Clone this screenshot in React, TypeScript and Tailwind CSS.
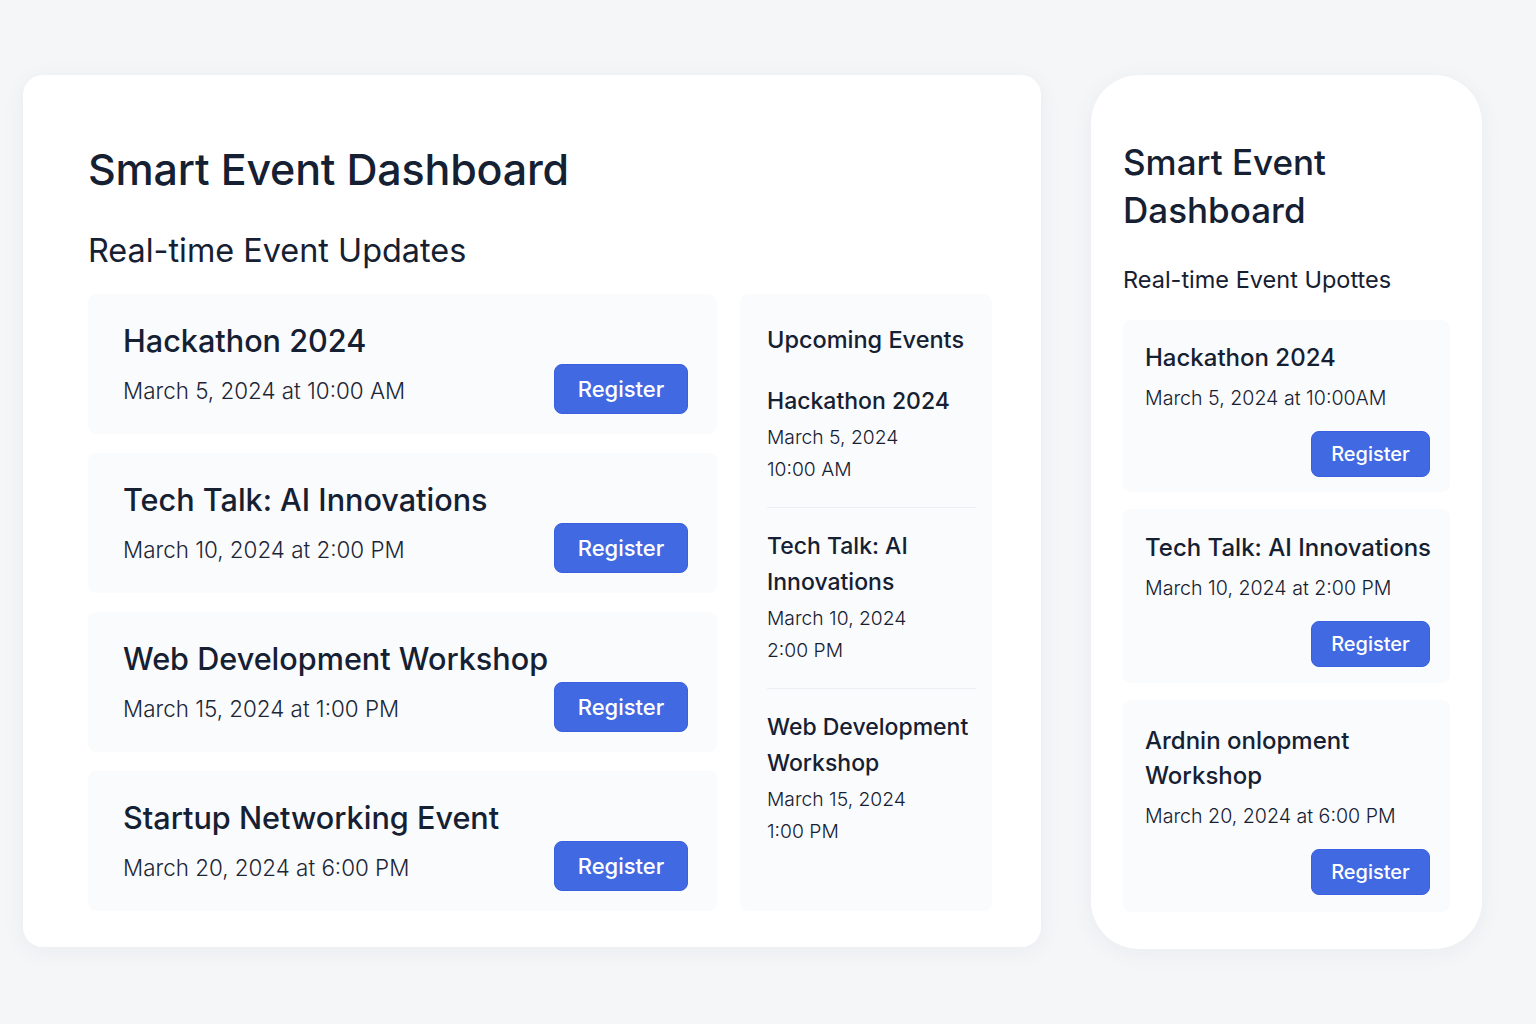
import React from "react";

interface EventItem {
  title: string;
  date: string;
  day: string;
  time: string;
}

const events: EventItem[] = [
  { title: "Hackathon 2024", date: "March 5, 2024 at 10:00 AM", day: "March 5, 2024", time: "10:00 AM" },
  { title: "Tech Talk: AI Innovations", date: "March 10, 2024 at 2:00 PM", day: "March 10, 2024", time: "2:00 PM" },
  { title: "Web Development Workshop", date: "March 15, 2024 at 1:00 PM", day: "March 15, 2024", time: "1:00 PM" },
  { title: "Startup Networking Event", date: "March 20, 2024 at 6:00 PM", day: "March 20, 2024", time: "6:00 PM" },
];

const compactEvents = [
  { title: "Hackathon 2024", date: "March 5, 2024 at 10:00AM", h: "h-[172px]", pt: "pt-[20px]" },
  { title: "Tech Talk: AI Innovations", date: "March 10, 2024 at 2:00 PM", h: "h-[174px]", pt: "pt-[21px]" },
  { title: "Ardnin onlopment Workshop", date: "March 20, 2024 at 6:00 PM", h: "h-[212px]", pt: "pt-[23px]" },
];

const RegisterButton: React.FC<{ small?: boolean }> = ({ small }) => (
  <button
    className={
      small
        ? "w-[119px] h-[46px] rounded-lg bg-[#4169e1] border border-[#3a5fe0] text-white text-[20px] font-medium"
        : "w-[134px] h-[50px] rounded-lg bg-[#4169e1] border border-[#3a5fe0] text-white text-[22px] font-medium"
    }
  >
    Register
  </button>
);

const EventCard: React.FC<{ item: EventItem }> = ({ item }) => (
  <div className="h-[140px] rounded-lg bg-[#fafbfc] pl-[35px] pr-[29px] pb-[20px] flex items-end justify-between">
    <div className="pb-[8px]">
      <div className="text-[30.6px] leading-[40px] font-medium text-[#152032]">{item.title}</div>
      <div className="text-[22.4px] leading-[30px] font-light text-[#1d2636] mt-[15px]">{item.date}</div>
    </div>
    <RegisterButton />
  </div>
);

export default function App() {
  return (
    <div className="min-h-screen bg-[#f5f6f8] font-['Inter',sans-serif] text-[#152032]">
      <div className="flex items-start pt-[75px] pl-[23px] gap-[50px]">
        {/* main dashboard */}
        <div className="w-[1018px] bg-white rounded-[20px] shadow-[0_4px_24px_rgba(20,30,50,0.05)] pl-[65px] pr-[49px] pt-[66px] pb-[36px]">
          <h1 className="text-[43px] leading-[56px] font-medium tracking-[-0.2px] text-[#152032]">Smart Event Dashboard</h1>
          <h2 className="text-[32.4px] leading-[40px] font-normal text-[#152032] mt-[34px]">Real-time Event Updates</h2>

          <div className="flex gap-[23px] mt-[23px]">
            <div className="w-[629px] flex flex-col gap-[19px]">
              {events.map((e) => (
                <EventCard key={e.title} item={e} />
              ))}
            </div>

            <div className="w-[252px] rounded-lg bg-[#fafbfc] pl-[27px] pr-[16px] pt-[30px]">
              <div className="text-[23.5px] leading-[32px] font-medium">Upcoming Events</div>
              <div className="mt-[27px]">
                {events.slice(0, 3).map((e, i) => (
                  <div key={e.title} className={i > 0 ? "border-t border-[#eceef2] pt-[20px] pb-[22px]" : "pb-[22px]"}>
                    <div className="text-[23px] leading-[36px] font-medium">{e.title}</div>
                    <div className="text-[19.3px] leading-[32px] font-light mt-[2px]">{e.day}</div>
                    <div className="text-[19.3px] leading-[32px] font-light">{e.time}</div>
                  </div>
                ))}
              </div>
            </div>
          </div>
        </div>

        {/* compact dashboard */}
        <div className="w-[391px] bg-white rounded-[48px] shadow-[0_4px_24px_rgba(20,30,50,0.05)] px-[32px] pt-[63px] pb-[37px]">
          <h1 className="text-[35px] leading-[48px] font-medium text-[#152032]">Smart Event Dashboard</h1>
          <div className="text-[23.5px] leading-[32px] font-normal mt-[30px]">Real-time Event Upottes</div>
          <div className="flex flex-col gap-[17px] mt-[24px]">
            {compactEvents.map((e) => (
              <div key={e.title} className={`${e.h} ${e.pt} rounded-lg bg-[#fafbfc] pl-[22px] pr-[10px]`}>
                <div className="text-[24px] leading-[35px] font-medium">{e.title}</div>
                <div className="text-[19.6px] leading-[28px] font-light mt-[9px]">{e.date}</div>
                <div className="flex justify-end pr-[10px] mt-[19px]">
                  <RegisterButton small />
                </div>
              </div>
            ))}
          </div>
        </div>
      </div>
    </div>
  );
}
